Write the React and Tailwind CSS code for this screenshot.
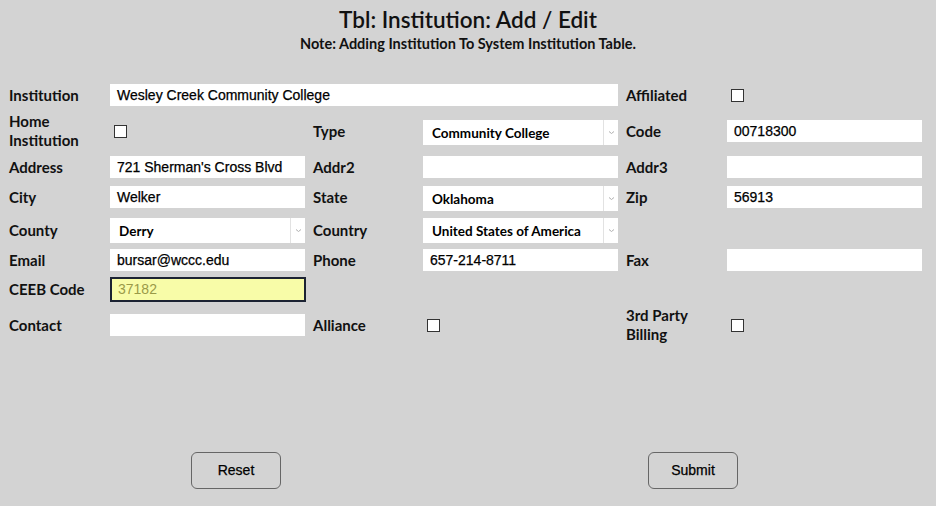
import React from 'react';

const labelFont = { fontFamily: '"Lato", "Open Sans", sans-serif' };
const inputFont = { fontFamily: '"Liberation Sans", Arial, sans-serif', WebkitTextStroke: '0.25px #000' };

const Label = ({ children }) => (
  <div className="text-[15px] font-bold leading-[19px] text-[#111]" style={labelFont}>
    {children}
  </div>
);

const TextBox = ({ value = '', wide = false }) => (
  <div
    className={`flex h-[22px] items-center bg-white px-[7px] text-[14px] text-black ${wide ? 'w-[508px]' : 'w-[195px]'}`}
    style={inputFont}
  >
    {value}
  </div>
);

const SelectBox = ({ value, shift = false }) => (
  <div className={`flex h-[25px] w-[195px] items-stretch bg-white ${shift ? 'mt-[3px]' : ''}`}>
    <div className="flex flex-1 items-center pl-[9px] pt-[2px] text-[13.5px] font-bold text-black" style={labelFont}>
      {value}
    </div>
    <div className="flex w-[15px] items-center justify-center border-l border-[#e2e2e2]">
      <svg width="7" height="5" viewBox="0 0 7 5">
        <path d="M1 1.5 L3.5 3.5 L6 1.5" stroke="#b0b0b0" strokeWidth="1" fill="none" />
      </svg>
    </div>
  </div>
);

const Check = () => <div className="ml-[4px] h-[13px] w-[13px] border border-[#333] bg-white" />;

// six fixed columns: label / field / label / field / label / field
const widths = ['w-[101px]', 'w-[203px]', 'w-[110px]', 'w-[203px]', 'w-[101px]', 'w-[195px]'];

const Row = ({ h, cells }) => (
  <div className={`flex items-center ${h}`}>
    {cells.map((c, i) => (
      <div key={i} className={`flex shrink-0 items-center ${widths[i]}`}>
        {c}
      </div>
    ))}
  </div>
);

export default function App() {
  return (
    <div className="h-[506px] w-[936px] overflow-hidden bg-[#d3d3d3] text-black">
      <div className="pt-[5px] text-center text-[#111]" style={labelFont}>
        <h1 className="text-[22.5px] font-semibold leading-[30px]">Tbl: Institution: Add / Edit</h1>
        <p className="text-[14.5px] font-bold leading-[18px]">
          Note: Adding Institution To System Institution Table.
        </p>
      </div>

      <div className="mt-[24px] pl-[9px]">
        <div className="flex h-[36px] items-center">
          <div className="w-[101px] shrink-0">
            <Label>Institution</Label>
          </div>
          <div className="w-[516px] shrink-0">
            <TextBox wide value="Wesley Creek Community College" />
          </div>
          <div className="w-[101px] shrink-0">
            <Label>Affiliated</Label>
          </div>
          <Check />
        </div>
        <Row
          h="h-[36px]"
          cells={[
            <Label>
              Home
              <br />
              Institution
            </Label>,
            <Check />,
            <Label>Type</Label>,
            <SelectBox value="Community College" shift />,
            <Label>Code</Label>,
            <TextBox value="00718300" />,
          ]}
        />
        <Row
          h="h-[36px]"
          cells={[
            <Label>Address</Label>,
            <TextBox value="721 Sherman's Cross Blvd" />,
            <Label>Addr2</Label>,
            <TextBox />,
            <Label>Addr3</Label>,
            <TextBox />,
          ]}
        />
        <Row
          h="h-[24px]"
          cells={[
            <Label>City</Label>,
            <TextBox value="Welker" />,
            <Label>State</Label>,
            <SelectBox value="Oklahoma" shift />,
            <Label>Zip</Label>,
            <TextBox value="56913" />,
          ]}
        />
        <Row
          h="h-[43px]"
          cells={[
            <Label>County</Label>,
            <SelectBox value="Derry" />,
            <Label>Country</Label>,
            <SelectBox value="United States of America" />,
            null,
            null,
          ]}
        />
        <Row
          h="h-[16px]"
          cells={[
            <Label>Email</Label>,
            <TextBox value="bursar@wccc.edu" />,
            <Label>Phone</Label>,
            <TextBox value="657-214-8711" />,
            <Label>Fax</Label>,
            <TextBox />,
          ]}
        />
        <Row
          h="h-[42px]"
          cells={[
            <Label>CEEB Code</Label>,
            <div
              className="flex h-[25px] w-[196px] items-center border-2 border-[#1c2333] bg-[#f8fca8] px-[6px] text-[14px] text-[#9a9a48]"
              style={{ fontFamily: '"Liberation Sans", Arial, sans-serif' }}
            >
              37182
            </div>,
            null,
            null,
            null,
            null,
          ]}
        />
        <Row
          h="h-[30px]"
          cells={[
            <Label>Contact</Label>,
            <TextBox />,
            <Label>Alliance</Label>,
            <Check />,
            <Label>
              3rd Party
              <br />
              Billing
            </Label>,
            <Check />,
          ]}
        />
      </div>

      <div className="mt-[112px] flex">
        <button
          className="ml-[191px] h-[37px] w-[90px] rounded-[6px] border border-[#666] text-[14px] text-black"
          style={inputFont}
        >
          Reset
        </button>
        <button
          className="ml-[367px] h-[37px] w-[90px] rounded-[6px] border border-[#666] text-[14px] text-black"
          style={inputFont}
        >
          Submit
        </button>
      </div>
    </div>
  );
}
